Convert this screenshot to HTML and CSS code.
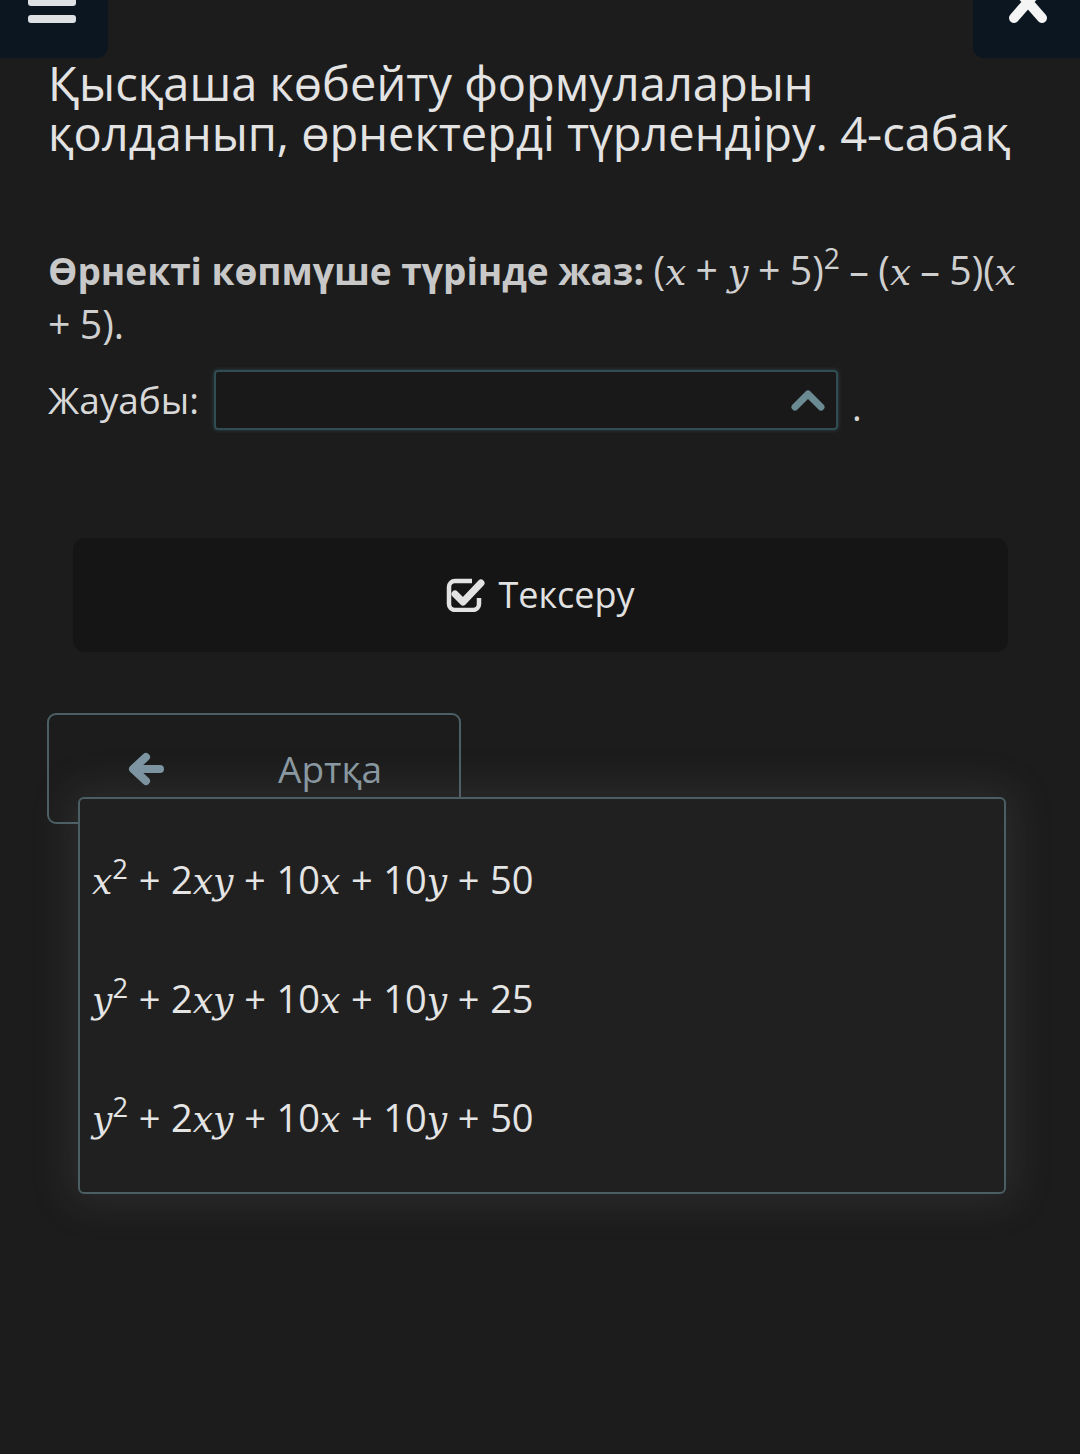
FILE: index.html
```html
<!DOCTYPE html>
<html lang="kk">

<head>
    <meta charset="UTF-8">
    <meta name="viewport" content="width=device-width, initial-scale=1.0">
    <title>Тапсырма</title>
    <link rel="stylesheet" href="styles.css">
</head>

<body>
    <div class="topbar">
        <button class="corner-btn menu-btn" aria-label="Мәзір">
            <svg width="50" height="24" viewBox="0 0 50 24">
                <rect x="1" y="-6" width="48" height="12" rx="3" fill="#dde1e4" />
                <rect x="1" y="15" width="48" height="8" rx="3" fill="#dde1e4" />
            </svg>
        </button>
        <button class="corner-btn close-btn" aria-label="Жабу">
            <svg width="44" height="26" viewBox="0 0 44 26">
                <path d="M8 -14 L36 18 M36 -14 L8 18" stroke="#f4f4f4" stroke-width="10" stroke-linecap="round" />
            </svg>
        </button>
    </div>

    <main class="page">
        <h1 class="lesson-title">Қысқаша көбейту формулаларын қолданып, өрнектерді түрлендіру. 4-сабақ</h1>

        <p class="question">
            <strong>Өрнекті көпмүше түрінде жаз:</strong>
            <span class="math">(<i class="mi">x</i><span class="op">+</span><i class="mi">y</i><span class="op">+</span>5)<sup>2</sup><span class="op">–</span>(<i class="mi">x</i><span class="op">–</span>5)(<i class="mi">x</i></span>
            <span class="math"><span class="op lead">+</span>5).</span>
        </p>

        <div class="answer-row">
            <span class="answer-label">Жауабы:</span>
            <div class="select-box">
                <svg class="chevron" width="36" height="24" viewBox="0 0 36 24">
                    <path d="M5 19 L18 6 L31 19" fill="none" stroke="#6b8b92" stroke-width="7" stroke-linecap="round" stroke-linejoin="round" />
                </svg>
            </div>
            <span class="answer-dot">.</span>
        </div>

        <button class="check-btn">
            <svg width="40" height="36" viewBox="0 0 40 36">
                <path d="M26 5 H9 a6 6 0 0 0 -6 6 v17 a6 6 0 0 0 6 6 h18 a6 6 0 0 0 6 -6 v-6" fill="none" stroke="#e2e2e2" stroke-width="4.5" />
                <path d="M9 18 L17 26 L35 7" fill="none" stroke="#e2e2e2" stroke-width="7" stroke-linecap="round" stroke-linejoin="round" />
            </svg>
            <span>Тексеру</span>
        </button>

        <button class="back-btn">
            <svg width="38" height="34" viewBox="0 0 38 34">
                <path d="M19 5 L6 17 L19 29 M7 17 H33" fill="none" stroke="#7d96a3" stroke-width="8" stroke-linecap="round" stroke-linejoin="round" />
            </svg>
            <span>Артқа</span>
        </button>

        <!-- open dropdown of the answer select -->
        <ul class="dropdown">
            <li><i class="mi">x</i><sup>2</sup><span class="op">+</span>2<i class="mi">xy</i><span class="op">+</span>10<i class="mi">x</i><span class="op">+</span>10<i class="mi">y</i><span class="op">+</span>50</li>
            <li><i class="mi">y</i><sup>2</sup><span class="op">+</span>2<i class="mi">xy</i><span class="op">+</span>10<i class="mi">x</i><span class="op">+</span>10<i class="mi">y</i><span class="op">+</span>25</li>
            <li><i class="mi">y</i><sup>2</sup><span class="op">+</span>2<i class="mi">xy</i><span class="op">+</span>10<i class="mi">x</i><span class="op">+</span>10<i class="mi">y</i><span class="op">+</span>50</li>
        </ul>
    </main>
</body>

</html>
```

FILE: styles.css
```css
/* General Body Styling */
body {
    font-family: 'Open Sans', 'Noto Sans', sans-serif;
    background: #1c1c1c;
    color: #e0e0e0;
    margin: 0;
    padding: 0;
    min-height: 1454px;
}

/* Top corner buttons */
.topbar {
    display: flex;
    justify-content: space-between;
    height: 58px;
}

.corner-btn {
    width: 108px;
    height: 58px;
    border: none;
    background: #0b1620;
    padding: 0;
    display: flex;
    justify-content: center;
    align-items: flex-start;
}

.menu-btn {
    border-radius: 0 0 11px 0;
    padding-right: 4px;
}

.close-btn {
    width: 107px;
    border-radius: 0 0 0 11px;
    padding-left: 2px;
}

/* Page content */
.page {
    position: relative;
    padding: 0 48px;
}

.lesson-title {
    font-size: 47px;
    line-height: 50px;
    font-weight: 400;
    color: #e3e3e3;
    margin: 0;
}

.question {
    font-size: 37px;
    line-height: 54px;
    color: #cfcfcf;
    margin: 86px 0 0;
}

.question strong {
    font-weight: 700;
    color: #c8c8c8;
}

.math {
    font-size: 1.06em;
    line-height: 1;
}

.mi {
    font-family: 'DejaVu Serif', 'Liberation Serif', serif;
    font-style: italic;
    font-size: 0.95em;
}

.op {
    margin: 0 0.24em;
}

.op.lead {
    margin-left: 0;
}

sup {
    font-size: 0.72em;
    line-height: 0;
    vertical-align: 0.55em;
}

/* Answer row */
.answer-row {
    display: flex;
    align-items: center;
    margin-top: 15px;
    font-size: 37px;
    color: #d8d8d8;
}

.select-box {
    box-sizing: border-box;
    width: 624px;
    height: 60px;
    margin-left: 15px;
    border: 2px solid #2f4d53;
    border-radius: 4px;
    background: #191919;
    box-shadow: 0 0 4px rgba(70, 120, 130, 0.45);
    display: flex;
    justify-content: flex-end;
    align-items: center;
    padding-right: 10px;
}

.answer-dot {
    margin-left: 14px;
    padding-top: 14px;
}

/* Buttons */
.check-btn {
    display: flex;
    justify-content: center;
    align-items: center;
    gap: 12px;
    width: 935px;
    height: 114px;
    margin: 106px 0 0 25px;
    background: #151515;
    border: none;
    border-radius: 12px;
    color: #e2e2e2;
    font-family: inherit;
    font-size: 36px;
    padding: 0 0 2px;
}

.back-btn {
    display: flex;
    align-items: center;
    width: 414px;
    height: 111px;
    margin: 61px 0 0 -1px;
    background: transparent;
    border: 2px solid #4b5f65;
    border-radius: 9px;
    color: #8b9aa3;
    font-family: inherit;
    font-size: 37px;
    padding: 0 0 0 78px;
}

.back-btn span {
    margin-left: 113px;
}

/* Dropdown list */
.dropdown {
    position: absolute;
    top: 739px;
    left: 78px;
    width: 924px;
    height: 356px;
    margin: 0;
    padding: 21px 0 16px;
    list-style: none;
    background: #202020;
    border: 2px solid #4a5e63;
    border-radius: 6px;
    box-shadow: 0 0 40px 8px rgba(120, 120, 120, 0.18);
    font-size: 38px;
    color: #e4e4e4;
}

.dropdown li {
    height: 119px;
    line-height: 119px;
    padding-left: 12px;
    white-space: nowrap;
}

.dropdown .op {
    margin: 0 0.28em;
}
```
